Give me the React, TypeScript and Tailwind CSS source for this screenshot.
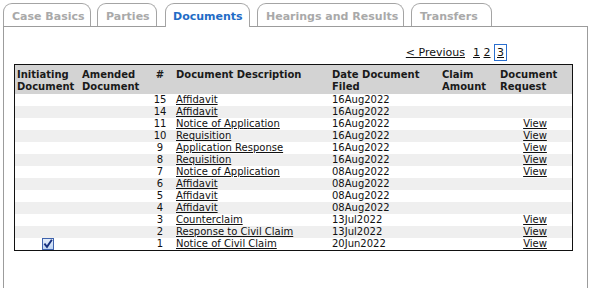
import React from "react";

type Row = { n: number; desc: string; date: string; view: boolean; init?: boolean };

const rows: Row[] = [
  { n: 15, desc: "Affidavit", date: "16Aug2022", view: false },
  { n: 14, desc: "Affidavit", date: "16Aug2022", view: false },
  { n: 11, desc: "Notice of Application", date: "16Aug2022", view: true },
  { n: 10, desc: "Requisition", date: "16Aug2022", view: true },
  { n: 9, desc: "Application Response", date: "16Aug2022", view: true },
  { n: 8, desc: "Requisition", date: "16Aug2022", view: true },
  { n: 7, desc: "Notice of Application", date: "08Aug2022", view: true },
  { n: 6, desc: "Affidavit", date: "08Aug2022", view: false },
  { n: 5, desc: "Affidavit", date: "08Aug2022", view: false },
  { n: 4, desc: "Affidavit", date: "08Aug2022", view: false },
  { n: 3, desc: "Counterclaim", date: "13Jul2022", view: true },
  { n: 2, desc: "Response to Civil Claim", date: "13Jul2022", view: true },
  { n: 1, desc: "Notice of Civil Claim", date: "20Jun2022", view: true, init: true },
];

const tabs = [
  { label: "Case Basics", w: "w-[88px]", ml: "ml-0", active: false },
  { label: "Parties", w: "w-[60px]", ml: "ml-[6px]", active: false },
  { label: "Documents", w: "w-[85px]", ml: "ml-[8px]", active: true },
  { label: "Hearings and Results", w: "w-[147px]", ml: "ml-[7px]", active: false },
  { label: "Transfers", w: "w-[81px]", ml: "ml-[7px]", active: false },
];

const cols = "grid grid-cols-[65px_70px_20px_160px_110px_58px_74px]";

function Check() {
  return (
    <svg width="12" height="12" viewBox="0 0 12 12">
      <defs>
        <linearGradient id="cbg" x1="0" y1="0" x2="0" y2="1">
          <stop offset="0" stopColor="#e6effb" />
          <stop offset="1" stopColor="#bcd3f2" />
        </linearGradient>
      </defs>
      <rect x="0.5" y="0.5" width="11" height="11" fill="url(#cbg)" stroke="#3f63ad" />
      <path d="M3 6.3 L5 8.8 L9.3 2.6" fill="none" stroke="#16307e" strokeWidth="1.9" strokeLinecap="square" />
    </svg>
  );
}

export default function App() {
  return (
    <div className="w-[594px] h-[288px] overflow-hidden bg-white pt-[3px] pl-[3px] font-['DejaVu_Sans',Verdana,sans-serif] text-[#111]">
      <div className="flex items-end">
        {tabs.map((t) =>
          t.active ? (
            <div
              key={t.label}
              className={`relative z-10 -mb-px h-[24px] ${t.w} ${t.ml} bg-white border border-b-0 border-[#a4a4a4] rounded-t-[9px] pl-[7px] pt-[6px] text-[11px] leading-[13px] font-bold text-[#1f6cc6] whitespace-nowrap`}
            >
              {t.label}
            </div>
          ) : (
            <div
              key={t.label}
              className={`h-[23px] ${t.w} ${t.ml} bg-white border border-b-0 border-[#a4a4a4] rounded-t-[9px] pl-[8px] pt-[6px] text-[11px] leading-[13px] font-bold text-[#a9a9a9] whitespace-nowrap`}
            >
              {t.label}
            </div>
          )
        )}
      </div>
      <div className="w-[585px] h-[262px] border border-b-0 border-[#9c9c9c]">
        <div className="ml-[10px] w-[559px]">
          <div className="mt-[17px] h-[17px] text-right pr-[66px] text-[11px] leading-[15px] text-[#111] whitespace-nowrap">
            <span className="underline">&lt; Previous</span>
            <span className="ml-[8px] underline">1</span>{" "}
            <span className="underline">2</span>{" "}
            <span className="inline-block border border-[#2a6fd0] px-[2px] underline">3</span>
          </div>
          <div className="mt-[3px] border border-[#111]">
            <div className={`${cols} h-[29px] bg-[#d3d3d3] pt-[4px] text-[10px] leading-[12px] font-bold text-[#1a1a1a]`}>
              <div className="pl-[2px]">Initiating<br />Document</div>
              <div className="pl-[2px]">Amended<br />Document</div>
              <div className="text-center">#</div>
              <div className="pl-[6px]">Document Description</div>
              <div className="pl-[2px]">Date Document<br />Filed</div>
              <div className="pl-[2px]">Claim<br />Amount</div>
              <div className="pl-[2px]">Document<br />Request</div>
            </div>
            {rows.map((r, i) => (
              <div
                key={r.n}
                className={`${cols} h-[12px] text-[10px] leading-[12px] ${i % 2 === 1 ? "bg-[#efefef]" : "bg-white"}`}
              >
                <div className="flex justify-center items-center">{r.init ? <Check /> : null}</div>
                <div />
                <div className="text-center">{r.n}</div>
                <div className="pl-[6px] whitespace-nowrap">
                  <span className="underline">{r.desc}</span>
                </div>
                <div className="pl-[2px]">{r.date}</div>
                <div />
                <div className="text-center">{r.view ? <span className="underline">View</span> : null}</div>
              </div>
            ))}
          </div>
        </div>
      </div>
    </div>
  );
}
